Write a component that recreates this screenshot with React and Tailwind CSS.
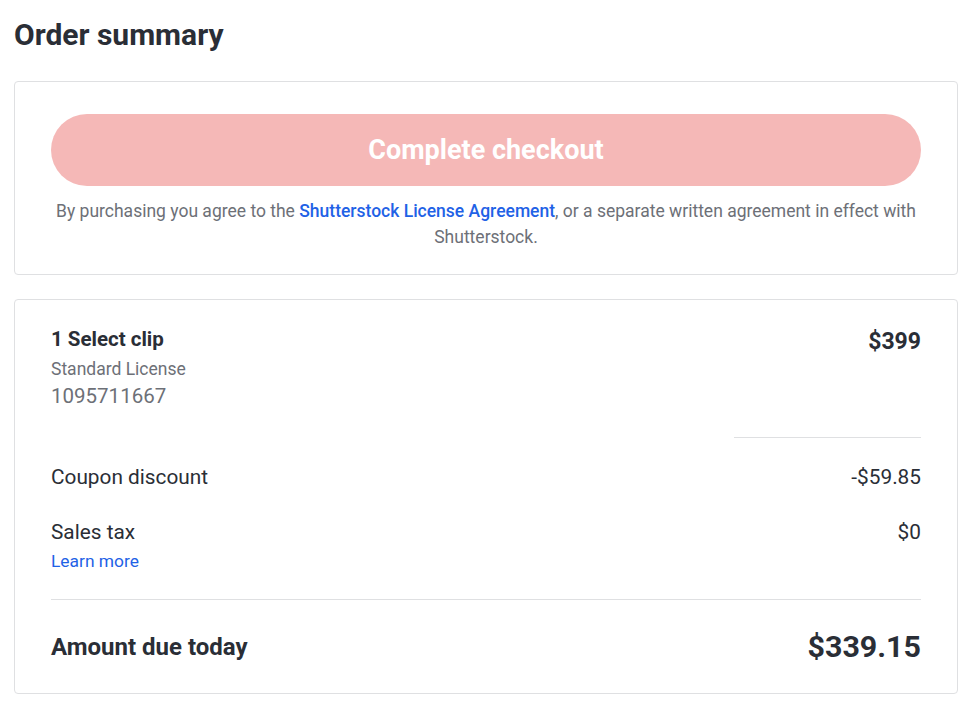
export default function App() {
  return (
    <div className="min-h-screen bg-white pl-[14px] pr-[18px] pt-[17px] font-['Roboto',sans-serif] text-[#2a2e36]">
      <h1 className="text-[30px] font-bold leading-9">Order summary</h1>

      {/* Checkout card */}
      <div className="mt-7 rounded border border-[#dfe0e2] px-9 pb-6 pt-8">
        <button className="h-[72px] w-full cursor-pointer rounded-full bg-[#f5b8b7] text-[27px] font-bold text-white">
          Complete checkout
        </button>
        <p className="mt-3 text-center text-[17.5px] leading-[26px] text-[#6d7077]">
          By purchasing you agree to the{' '}
          <a href="#" className="font-medium text-[#1f62e6]">
            Shutterstock License Agreement
          </a>
          , or a separate written agreement in effect with Shutterstock.
        </p>
      </div>

      {/* Summary card */}
      <div className="mt-6 rounded border border-[#dfe0e2] px-9 pb-7 pt-[27px]">
        <div className="flex items-start justify-between">
          <div>
            <div className="text-[20.5px] font-bold leading-6">1 Select clip</div>
            <div className="mt-1.5 text-[17.5px] leading-6 text-[#6d7077]">Standard License</div>
            <div className="text-[20.5px] leading-[30px] text-[#6d7077]">1095711667</div>
          </div>
          <div className="mt-[3px] text-[23px] font-bold leading-6">$399</div>
        </div>

        <div className="ml-auto mt-[26px] h-px w-[187px] bg-[#dfe0e2]" />

        <div className="mt-[25px] flex items-center justify-between text-[20.8px] leading-7">
          <span>Coupon discount</span>
          <span>-$59.85</span>
        </div>

        <div className="mt-[27px] flex items-start justify-between text-[20.8px] leading-7">
          <span>Sales tax</span>
          <span>$0</span>
        </div>
        <a href="#" className="mt-[3px] block text-[17.4px] leading-6 text-[#1f62e6]">
          Learn more
        </a>

        <div className="mt-[26px] h-px w-full bg-[#dfe0e2]" />

        <div className="mt-[29px] flex items-center justify-between">
          <span className="text-[24px] font-bold leading-9">Amount due today</span>
          <span className="text-[30.4px] font-bold leading-9">$339.15</span>
        </div>
      </div>
    </div>
  );
}
